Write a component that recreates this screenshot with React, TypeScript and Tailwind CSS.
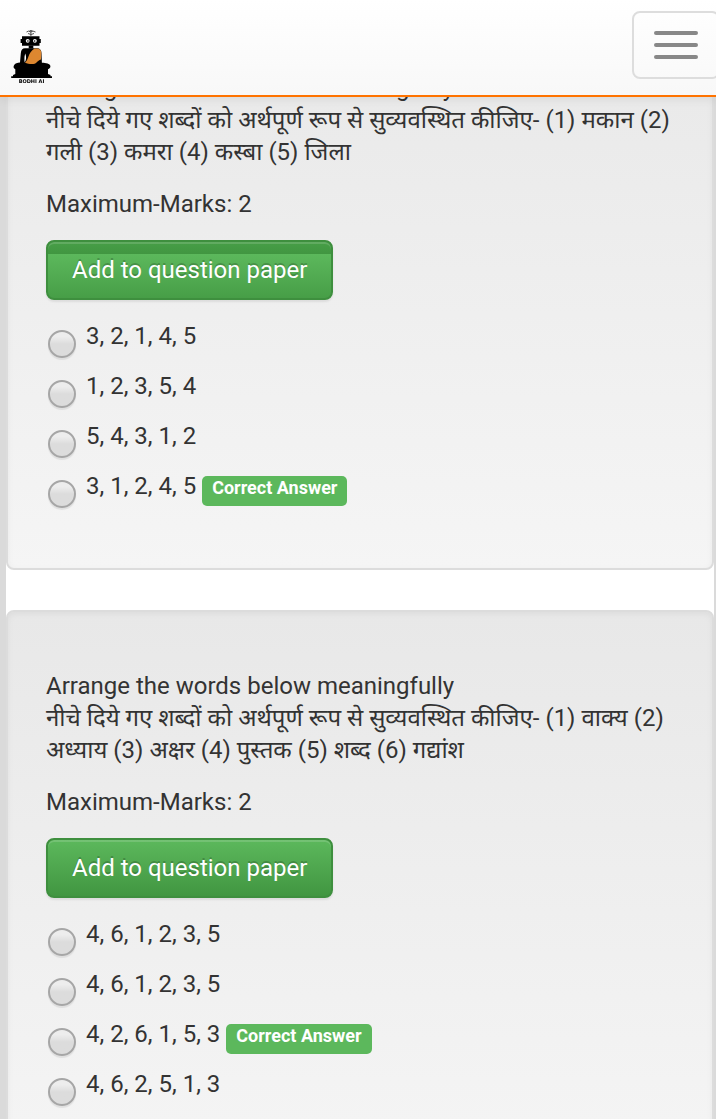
type Option = { text: string; correct?: boolean };
type Question = { id: string; hindi: string; options: Option[]; highlighted?: boolean };

const questions: Question[] = [
  {
    id: "q1",
    hindi: "नीचे दिये गए शब्दों को अर्थपूर्ण रूप से सुव्यवस्थित कीजिए- (1) मकान (2) गली (3) कमरा (4) कस्बा (5) जिला",
    highlighted: true,
    options: [
      { text: "3, 2, 1, 4, 5" },
      { text: "1, 2, 3, 5, 4" },
      { text: "5, 4, 3, 1, 2" },
      { text: "3, 1, 2, 4, 5", correct: true },
    ],
  },
  {
    id: "q2",
    hindi: "नीचे दिये गए शब्दों को अर्थपूर्ण रूप से सुव्यवस्थित कीजिए- (1) वाक्य (2) अध्याय (3) अक्षर (4) पुस्तक (5) शब्द (6) गद्यांश",
    options: [
      { text: "4, 6, 1, 2, 3, 5" },
      { text: "4, 6, 1, 2, 3, 5" },
      { text: "4, 2, 6, 1, 5, 3", correct: true },
      { text: "4, 6, 2, 5, 1, 3" },
    ],
  },
];

function Logo() {
  return (
    <svg viewBox="0 0 46 60" className="block h-[60px] w-[46px]" aria-hidden="true">
      <path
        d="M18.5 6q2-1.800 4.200 0q2.200-1.800 4.800 0M20 7.500q3 2 6 0M21.500 4.800h3M22.900 4v6"
        fill="none"
        stroke="#444"
        strokeWidth="0.9"
      />
      <path fill="#000" d="M14 10.200h17.500v9.500H14zM12.600 13h1.400v4h-1.400zM31.500 13h1.300v4h-1.300z" />
      <path fill="#000" d="M20.700 19.500h4.600v3h-4.600z" />
      <circle cx="19.700" cy="14.800" r="1.900" fill="#fff" />
      <circle cx="26.900" cy="14.800" r="1.900" fill="#fff" />
      <circle cx="19.900" cy="15" r="0.800" fill="#000" />
      <circle cx="26.700" cy="15" r="0.800" fill="#000" />
      <path
        fill="#000"
        d="M17 22.300h12c3 0 4.500 2 4.500 5l.4 9.500c4 0 8.200 1 8.500 3.200.2 1.800-1 2.800-2.400 3.200v4.800l2.500 1v1.300h1.500v1.700H3.200v-1.700H5V49l2.300-1v-4.800c-1.500-.8-2.200-2-1.400-3.800 1.200-2 3.500-2.300 6.100-2.800l.8-9.300c.3-3.300 1.600-5 4.200-5z"
      />
      <path
        fill="#dd8730"
        d="M26.500 22.600h2.500c3 0 4.300 1.800 4.300 4.600l-.3 6.300c-2 .5-3 1.500-4.500 3-1 1-2.500 1.500-4.500 1.500-2.800 0-5-.4-7-1.300 1.500-1.500 2.500-3.400 3.200-5.500 1.300-3.700 3-6.600 6.300-8.600z"
      />
      <path fill="#fff" d="M17.200 27.500c-.9 3-1 6-.5 9 1.500-2.300 2-5.800.5-9z" />
      <text x="23.500" y="56.500" textAnchor="middle" fontSize="5" fontWeight="700" fontFamily="DejaVu Sans, sans-serif">
        BODHI AI
      </text>
    </svg>
  );
}

function Header() {
  return (
    <header className="fixed inset-x-0 top-0 z-10 flex items-start justify-between overflow-hidden border-b-2 border-[#ff7300] bg-linear-to-b from-white to-[#f8f8f8] pt-[11px] pb-[9px] shadow-[0_2px_10px_rgba(0,0,0,0.075)]">
      <a href="#home" aria-label="Bodhi AI" className="mt-[15px] ml-2">
        <Logo />
      </a>
      <button
        type="button"
        aria-label="Toggle navigation"
        className="-mr-1 flex flex-col gap-2 rounded-lg border-2 border-[#ddd] px-5 py-[18px]"
      >
        <span className="h-1 w-11 rounded-xs bg-[#888]" />
        <span className="h-1 w-11 rounded-xs bg-[#888]" />
        <span className="h-1 w-11 rounded-xs bg-[#888]" />
      </button>
    </header>
  );
}

function QuestionCard({ question }: { question: Question }) {
  return (
    <article className="rounded-lg border-2 border-[#dcdcdc] bg-linear-to-b from-[#e8e8e8] to-[#f5f5f5] px-[38px] py-[38px] shadow-[inset_0_2px_6px_rgba(0,0,0,0.05),0_2px_0_rgba(255,255,255,0.1)]">
      <div className="py-5">
        <p>Arrange the words below meaningfully</p>
        <p>{question.hindi}</p>
        <p className="mt-5">Maximum-Marks: 2</p>
        <button
          type="button"
          className={
            "mt-5 flex h-[60px] items-center rounded-lg border-2 border-[#3e8f3e] px-6 text-white shadow-[inset_0_2px_0_rgba(255,255,255,0.15),0_2px_2px_rgba(0,0,0,0.075)] [text-shadow:0_-2px_0_rgba(0,0,0,0.2)] " +
            (question.highlighted
              ? "bg-[linear-gradient(#479e47_0,#419641_12px,#5cb85c_12px,#479e47_100%)]"
              : "bg-linear-to-b from-[#5cb85c] to-[#419641]")
          }
        >
          Add to question paper
        </button>
        <fieldset aria-label="Options" className="mt-5 flex flex-col gap-[10px]">
          {question.options.map((option, index) => (
            <label key={index} className="flex h-10 items-start">
              <input
                type="radio"
                name={question.id}
                className="mt-[10px] mr-[10px] ml-[2px] size-7 shrink-0 appearance-none rounded-full border-2 border-[#a6a6a6] bg-linear-to-b from-[#ededed] from-20% to-[#dcdcdc] to-50% shadow-[0_2px_1px_rgba(0,0,0,0.08)] checked:border-8 checked:border-[#555]"
              />
              <span>{option.text}</span>
              {option.correct && (
                <span className="mt-1.5 ml-1.5 rounded-[5px] bg-[#5cb85c] px-2.5 pb-1.5 text-[18px] leading-6 font-bold text-white">
                  Correct Answer
                </span>
              )}
            </label>
          ))}
        </fieldset>
      </div>
    </article>
  );
}

export default function App() {
  return (
    <div className="h-screen overflow-hidden bg-white font-[Roboto,'Noto_Sans','Noto_Sans_Devanagari',sans-serif] text-2xl leading-8 text-[#333]">
      <Header />
      <main className="flex min-h-full flex-col gap-10 border-r-2 border-l-6 border-[#dadada] pt-3">
        {questions.map((question) => (
          <QuestionCard key={question.id} question={question} />
        ))}
      </main>
    </div>
  );
}
